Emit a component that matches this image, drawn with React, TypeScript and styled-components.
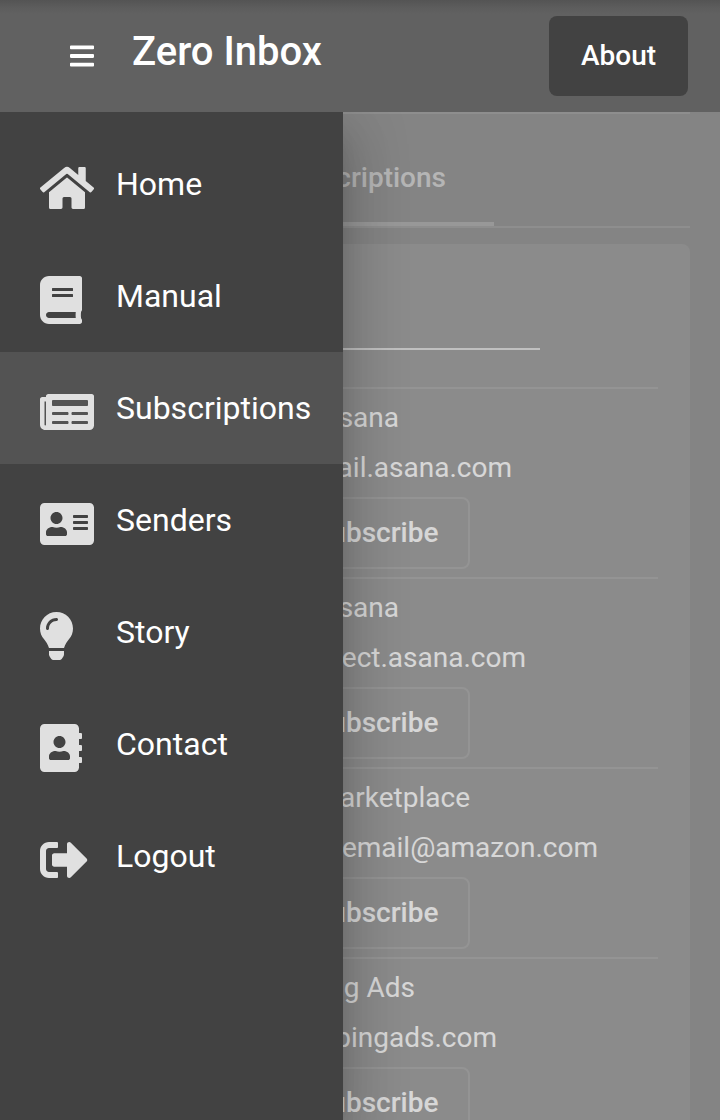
import React from "react";
import styled, { createGlobalStyle } from "styled-components";
import {
  FaAddressBook,
  FaAddressCard,
  FaBars,
  FaBook,
  FaHome,
  FaLightbulb,
  FaNewspaper,
  FaSignOutAlt,
} from "react-icons/fa";

const GlobalStyle = createGlobalStyle`
  * { box-sizing: border-box; }
  body {
    margin: 0;
    background: #303030;
    color: #fff;
    font-family: Roboto, "Liberation Sans", sans-serif;
    overflow: hidden;
  }
`;

const Shell = styled.div`
  display: flex;
  flex-direction: column;
  height: 1120px;
  overflow: hidden;
`;

const Toolbar = styled.header`
  display: flex;
  align-items: center;
  flex: none;
  height: 112px;
  padding: 0 32px 0 70px;
  background: linear-gradient(#545454, #5d5d5d 8px, #616161 14px);
`;

const MenuButton = styled.button`
  display: flex;
  width: 62px;
  padding: 0;
  border: 0;
  background: none;
  color: #fff;

  svg {
    width: 24px;
    height: 28px;
  }
`;

const Title = styled.h1`
  flex: 1;
  margin: 0 0 8px;
  font-size: 40px;
  font-weight: 500;
  line-height: 48px;
`;

const AboutButton = styled.button`
  width: 139px;
  height: 80px;
  padding: 0 0 2px;
  border: 0;
  border-radius: 8px;
  background: #424242;
  color: #fff;
  font: 500 28px Roboto, sans-serif;
`;

const Body = styled.div`
  position: relative;
  flex: 1;
  min-height: 0;
  overflow: hidden;
`;

const Page = styled.main`
  padding: 0 30px;
`;

const TabBar = styled.nav`
  display: flex;
  height: 116px;
  padding-top: 14px;
  border-top: 2px solid rgba(255, 255, 255, 0.12);
  border-bottom: 2px solid rgba(255, 255, 255, 0.12);
`;

const Tab = styled.a`
  display: flex;
  align-items: center;
  justify-content: flex-end;
  width: 267px;
  margin-left: 197px;
  padding: 4px 48px 0;
  border-bottom: 4px solid #616161;
  color: rgba(255, 255, 255, 0.6);
  font-size: 28px;
  font-weight: 500;
`;

const Card = styled.section`
  height: 1000px;
  margin-top: 16px;
  padding: 0 32px;
  border-radius: 8px;
  background: #424242;
`;

const Filter = styled.div`
  width: 360px;
  height: 106px;
  margin: 0 auto 37px;
  border-bottom: 2px solid rgba(255, 255, 255, 0.7);
`;

const Row = styled.article`
  display: flex;
  flex-direction: column;
  align-items: center;
  height: 190px;
  padding-top: 4px;
  border-top: 2px solid rgba(255, 255, 255, 0.12);
  font-size: 28px;
`;

const Line = styled.div<{ $width: number }>`
  display: flex;
  justify-content: flex-end;
  width: ${(p) => p.$width}px;
  height: 50px;
  line-height: 50px;
  white-space: nowrap;
`;

const Unsubscribe = styled.button`
  width: 220px;
  height: 72px;
  margin-top: 4px;
  padding: 0 30px 2px;
  border: 2px solid rgba(255, 255, 255, 0.12);
  border-radius: 8px;
  background: none;
  color: #fff;
  font: 500 28px Roboto, sans-serif;
  text-align: right;
`;

const Backdrop = styled.div`
  position: absolute;
  inset: 0;
  background: rgba(189, 189, 189, 0.6);
`;

const Drawer = styled.aside`
  position: absolute;
  top: 0;
  bottom: 0;
  left: 0;
  width: 343px;
  padding-top: 16px;
  background: #424242;
  box-shadow: 0 16px 20px -10px rgba(0, 0, 0, 0.2),
    0 32px 48px 4px rgba(0, 0, 0, 0.14), 0 12px 60px 10px rgba(0, 0, 0, 0.12);
`;

const NavItem = styled.a<{ $active?: boolean }>`
  display: flex;
  align-items: center;
  height: 112px;
  padding-left: 40px;
  background: ${(p) => (p.$active ? "#535353" : "transparent")};
  font-size: 32px;
`;

const NavIcon = styled.span<{ $width: number }>`
  display: flex;
  width: 76px;
  padding-top: 8px;
  color: #e0e0e0;

  svg {
    width: ${(p) => p.$width}px;
    height: 48px;
  }
`;

const navItems = [
  { label: "Home", Icon: FaHome, width: 54 },
  { label: "Manual", Icon: FaBook, width: 42 },
  { label: "Subscriptions", Icon: FaNewspaper, width: 54, active: true },
  { label: "Senders", Icon: FaAddressCard, width: 54 },
  { label: "Story", Icon: FaLightbulb, width: 33 },
  { label: "Contact", Icon: FaAddressBook, width: 42 },
  { label: "Logout", Icon: FaSignOutAlt, width: 48 },
];

const subscriptions = [
  { name: "Asana", nameWidth: 78, email: "no-reply@mail.asana.com", emailWidth: 304 },
  { name: "Asana", nameWidth: 78, email: "hello@connect.asana.com", emailWidth: 332 },
  { name: "AWS Marketplace", nameWidth: 220, email: "market-email@amazon.com", emailWidth: 476 },
  { name: "Bing Ads", nameWidth: 110, email: "bingads@bingads.com", emailWidth: 274 },
];

export default function App() {
  return (
    <Shell>
      <GlobalStyle />
      <Toolbar>
        <MenuButton aria-label="Menu">
          <FaBars />
        </MenuButton>
        <Title>Zero Inbox</Title>
        <AboutButton>About</AboutButton>
      </Toolbar>
      <Body>
        <Page>
          <TabBar>
            <Tab>Subscriptions</Tab>
          </TabBar>
          <Card>
            <Filter />
            {subscriptions.map((s) => (
              <Row key={s.email}>
                <Line $width={s.nameWidth}>{s.name}</Line>
                <Line $width={s.emailWidth}>{s.email}</Line>
                <Unsubscribe>Unsubscribe</Unsubscribe>
              </Row>
            ))}
          </Card>
        </Page>
        <Backdrop />
        <Drawer>
          {navItems.map(({ label, Icon, width, active }) => (
            <NavItem key={label} $active={active}>
              <NavIcon $width={width}>
                <Icon />
              </NavIcon>
              {label}
            </NavItem>
          ))}
        </Drawer>
      </Body>
    </Shell>
  );
}
